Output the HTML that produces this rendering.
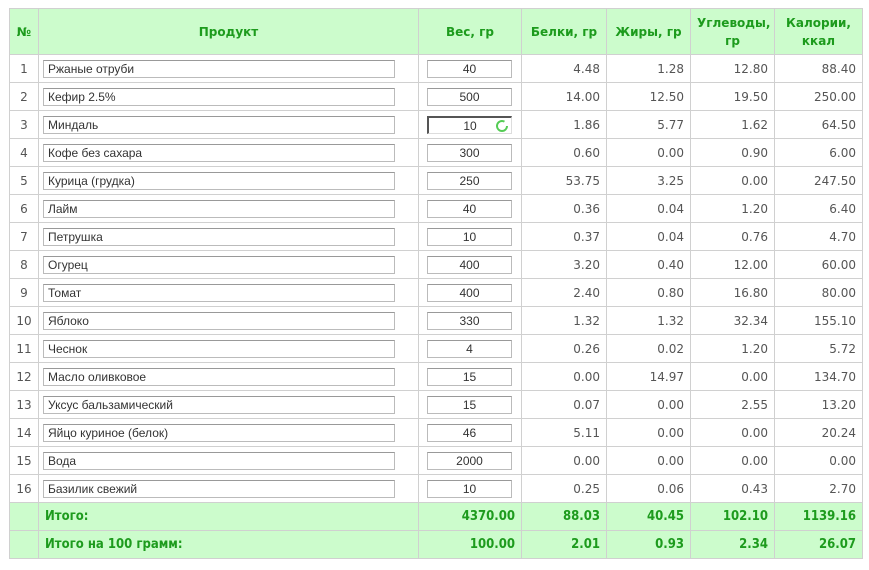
<!DOCTYPE html>
<html><head><meta charset="utf-8"><style>
body{margin:0;background:#fff;font-family:"DejaVu Sans",Verdana,sans-serif;}
table{position:absolute;left:9px;top:8px;border-collapse:collapse;table-layout:fixed;width:853px;}
tr{height:28px}
td,th{border:1px solid #d0d0d0;padding:0 6px;font-size:12px;color:#555;}
th{background:#ccfccc;color:#1d9b1d;font-weight:bold;line-height:18px;text-align:center}
td.n{text-align:center;padding:0}
td.r{text-align:right}
tr.t td{background:#ccfccc;color:#1d9b1d;font-weight:bold;font-family:"Liberation Sans Narrow","DejaVu Sans Condensed",sans-serif;font-size:13px;}
.in{border:1px solid #bbb;border-top-color:#999;height:18px;line-height:17px;font-family:"Liberation Sans",Arial,sans-serif;font-weight:normal;font-size:12px;color:#333;padding-left:4px;box-sizing:border-box;background:#fff}
.pi{width:352px;margin-left:-2px}
.wi{width:85px;text-align:center;padding:0;margin-left:2px;position:relative}
</style></head><body>
<table>
<colgroup><col style="width:29px"><col style="width:380px"><col style="width:103px"><col style="width:85px"><col style="width:84px"><col style="width:84px"><col style="width:88px"></colgroup>
<tr style="height:46px"><th>№</th><th>Продукт</th><th>Вес, гр</th><th>Белки, гр</th><th>Жиры, гр</th><th>Углеводы,<br>гр</th><th>Калории,<br>ккал</th></tr>
<tr><td class="n">1</td><td><div class="in pi">Ржаные отруби</div></td><td><div class="in wi">40</div></td><td class="r">4.48</td><td class="r">1.28</td><td class="r">12.80</td><td class="r">88.40</td></tr>
<tr><td class="n">2</td><td><div class="in pi">Кефир 2.5%</div></td><td><div class="in wi">500</div></td><td class="r">14.00</td><td class="r">12.50</td><td class="r">19.50</td><td class="r">250.00</td></tr>
<tr><td class="n">3</td><td><div class="in pi">Миндаль</div></td><td><div class="in wi" style="border-color:#555 #ddd #ddd #555;border-width:2px 1px 1px 2px">10<svg style="position:absolute;right:2px;top:1px" width="14" height="14" viewBox="0 0 14 14"><circle cx="7" cy="7" r="5" fill="none" stroke="#5c5" stroke-width="2" stroke-dasharray="26 6"/></svg></div></td><td class="r">1.86</td><td class="r">5.77</td><td class="r">1.62</td><td class="r">64.50</td></tr>
<tr><td class="n">4</td><td><div class="in pi">Кофе без сахара</div></td><td><div class="in wi">300</div></td><td class="r">0.60</td><td class="r">0.00</td><td class="r">0.90</td><td class="r">6.00</td></tr>
<tr><td class="n">5</td><td><div class="in pi">Курица (грудка)</div></td><td><div class="in wi">250</div></td><td class="r">53.75</td><td class="r">3.25</td><td class="r">0.00</td><td class="r">247.50</td></tr>
<tr><td class="n">6</td><td><div class="in pi">Лайм</div></td><td><div class="in wi">40</div></td><td class="r">0.36</td><td class="r">0.04</td><td class="r">1.20</td><td class="r">6.40</td></tr>
<tr><td class="n">7</td><td><div class="in pi">Петрушка</div></td><td><div class="in wi">10</div></td><td class="r">0.37</td><td class="r">0.04</td><td class="r">0.76</td><td class="r">4.70</td></tr>
<tr><td class="n">8</td><td><div class="in pi">Огурец</div></td><td><div class="in wi">400</div></td><td class="r">3.20</td><td class="r">0.40</td><td class="r">12.00</td><td class="r">60.00</td></tr>
<tr><td class="n">9</td><td><div class="in pi">Томат</div></td><td><div class="in wi">400</div></td><td class="r">2.40</td><td class="r">0.80</td><td class="r">16.80</td><td class="r">80.00</td></tr>
<tr><td class="n">10</td><td><div class="in pi">Яблоко</div></td><td><div class="in wi">330</div></td><td class="r">1.32</td><td class="r">1.32</td><td class="r">32.34</td><td class="r">155.10</td></tr>
<tr><td class="n">11</td><td><div class="in pi">Чеснок</div></td><td><div class="in wi">4</div></td><td class="r">0.26</td><td class="r">0.02</td><td class="r">1.20</td><td class="r">5.72</td></tr>
<tr><td class="n">12</td><td><div class="in pi">Масло оливковое</div></td><td><div class="in wi">15</div></td><td class="r">0.00</td><td class="r">14.97</td><td class="r">0.00</td><td class="r">134.70</td></tr>
<tr><td class="n">13</td><td><div class="in pi">Уксус бальзамический</div></td><td><div class="in wi">15</div></td><td class="r">0.07</td><td class="r">0.00</td><td class="r">2.55</td><td class="r">13.20</td></tr>
<tr><td class="n">14</td><td><div class="in pi">Яйцо куриное (белок)</div></td><td><div class="in wi">46</div></td><td class="r">5.11</td><td class="r">0.00</td><td class="r">0.00</td><td class="r">20.24</td></tr>
<tr><td class="n">15</td><td><div class="in pi">Вода</div></td><td><div class="in wi">2000</div></td><td class="r">0.00</td><td class="r">0.00</td><td class="r">0.00</td><td class="r">0.00</td></tr>
<tr><td class="n">16</td><td><div class="in pi">Базилик свежий</div></td><td><div class="in wi">10</div></td><td class="r">0.25</td><td class="r">0.06</td><td class="r">0.43</td><td class="r">2.70</td></tr>
<tr class="t"><td></td><td>Итого:</td><td class="r">4370.00</td><td class="r">88.03</td><td class="r">40.45</td><td class="r">102.10</td><td class="r">1139.16</td></tr>
<tr class="t"><td></td><td>Итого на 100 грамм:</td><td class="r">100.00</td><td class="r">2.01</td><td class="r">0.93</td><td class="r">2.34</td><td class="r">26.07</td></tr>
</table>
</body></html>
